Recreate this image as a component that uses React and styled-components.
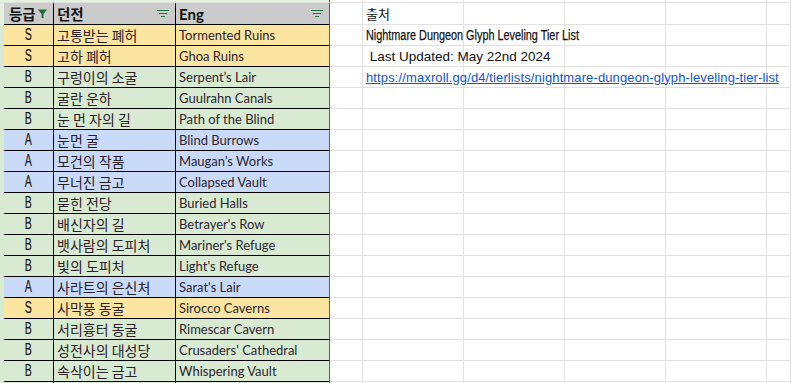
import React from "react";
import styled, { createGlobalStyle } from "styled-components";

const GlobalStyle = createGlobalStyle`
  html, body {
    margin: 0;
    padding: 0;
    background: #ffffff;
    overflow: hidden;
  }
  body {
    font-family: "Liberation Sans", Arial, sans-serif;
  }
`;

const tierColors = {
  S: "#fbe5a1",
  A: "#c9daf8",
  B: "#d9ead3",
};

const dungeons = [
  ["S", "고통받는 폐허", "Tormented Ruins"],
  ["S", "고하 폐허", "Ghoa Ruins"],
  ["B", "구렁이의 소굴", "Serpent’s Lair"],
  ["B", "굴란 운하", "Guulrahn Canals"],
  ["B", "눈 먼 자의 길", "Path of the Blind"],
  ["A", "눈먼 굴", "Blind Burrows"],
  ["A", "모건의 작품", "Maugan’s Works"],
  ["A", "무너진 금고", "Collapsed Vault"],
  ["B", "묻힌 전당", "Buried Halls"],
  ["B", "배신자의 길", "Betrayer's Row"],
  ["B", "뱃사람의 도피처", "Mariner's Refuge"],
  ["B", "빛의 도피처", "Light's Refuge"],
  ["A", "사라트의 은신처", "Sarat's Lair"],
  ["S", "사막풍 동굴", "Sirocco Caverns"],
  ["B", "서리흉터 동굴", "Rimescar Cavern"],
  ["B", "성전사의 대성당", "Crusaders' Cathedral"],
  ["B", "속삭이는 금고", "Whispering Vault"],
  ["B", "", ""],
];

const notes = [
  { kind: "plain", text: "출처" },
  { kind: "title", text: "Nightmare Dungeon Glyph Leveling Tier List" },
  { kind: "updated", text: " Last Updated: May 22nd 2024" },
  {
    kind: "link",
    text: "https://maxroll.gg/d4/tierlists/nightmare-dungeon-glyph-leveling-tier-list",
  },
];

const Sheet = styled.div`
  display: flex;
  flex-direction: column;
  width: 791px;
  height: 383px;
  overflow: hidden;
`;

const Row = styled.div`
  display: grid;
  grid-template-columns: 4px 50px 122px 154px 33px 101px 101px 101px 101px 1fr;
  height: ${(p) => p.$height}px;
  flex-shrink: 0;
`;

const Cell = styled.div`
  box-sizing: border-box;
  display: flex;
  align-items: center;
  justify-content: ${(p) => (p.$center ? "center" : "flex-start")};
  padding: 0 3px;
  background: ${(p) => p.$bg || "#ffffff"};
  border-right: 1px solid ${(p) => p.$right || "#e1e1e1"};
  border-bottom: 1px solid ${(p) => p.$bottom || "#e1e1e1"};
  white-space: nowrap;
  overflow: visible;
  position: relative;
  color: #1f1f1f;
  font-size: 13px;
`;

const HeadCell = styled(Cell)`
  background: #cbcbcb;
  font-weight: bold;
  font-size: 14px;
  color: #111;
  justify-content: space-between;
  padding: 0 6px 0 3px;
  border-bottom-color: #000;
`;

const Grade = styled.span`
  display: inline-block;
  font-family: "Liberation Sans", sans-serif;
  font-size: 16px;
  color: #1e1616;
  transform: scaleX(0.66);
  -webkit-text-stroke: 0.2px #1e1616;
`;

const Korean = styled.span`
  font-family: "Noto Sans CJK KR", sans-serif;
  font-size: 14px;
  color: #2a2028;
`;

const English = styled.span`
  font-family: Lato, "Open Sans", sans-serif;
  font-size: 13px;
  color: #2c2530;
`;

const HeadKorean = styled.span`
  font-family: "Noto Sans CJK KR", sans-serif;
  font-size: 14.5px;
  font-weight: bold;
  margin-left: ${(p) => p.$shift || 0}px;
`;

const HeadEnglish = styled.span`
  font-family: Lato, sans-serif;
  font-size: 15px;
  font-weight: bold;
`;

const Note = styled.span`
  display: inline-block;
  position: relative;
  z-index: 1;
  font-family: ${(p) =>
    p.$kind === "plain"
      ? `"Noto Sans CJK KR", sans-serif`
      : `"Liberation Sans", Arial, sans-serif`};
  font-size: ${(p) => (p.$kind === "updated" ? 13.5 : p.$kind === "title" ? 15.5 : 13)}px;
  color: ${(p) => (p.$kind === "link" ? "#1155cc" : "#111")};
  text-decoration: ${(p) => (p.$kind === "link" ? "underline" : "none")};
  letter-spacing: ${(p) => (p.$kind === "link" ? "0.12px" : "0")};
  white-space: pre;
  transform-origin: left center;
  transform: ${(p) => (p.$kind === "title" ? "scaleX(0.7)" : "none")};
  -webkit-text-stroke: ${(p) => (p.$kind === "title" ? "0.25px #111" : "0")};
`;

function FunnelIcon() {
  return (
    <svg width="9" height="10" viewBox="0 0 9 10">
      <path d="M0 0.5h9L5.5 5v4.5L3.5 8.5V5z" fill="#1e6b3a" />
    </svg>
  );
}

function FilterLines() {
  return (
    <svg width="12" height="8" viewBox="0 0 12 8">
      <rect x="0" y="0" width="12" height="1" fill="#1e7b45" />
      <rect x="2" y="3" width="8" height="1" fill="#1e7b45" />
      <rect x="4" y="6" width="4" height="1" fill="#1e7b45" />
    </svg>
  );
}

function EmptyCells({ from }) {
  const list = [];
  for (let i = from; i < 10; i++) {
    list.push(<Cell key={i} />);
  }
  return list;
}

export default function App() {
  return (
    <>
      <GlobalStyle />
      <Sheet>
        <Row $height={3}>
          <Cell $bg="#e5f1df" />
          <Cell $bg="#e5f1df" />
          <Cell $bg="#e5f1df" />
          <Cell $bg="#e5f1df" $right="#2e7d32" />
          <EmptyCells from={4} />
        </Row>
        <Row $height={22}>
          <Cell $bg="#e5f1df" />
          <HeadCell $right="#000">
            <HeadKorean $shift={2}>등급</HeadKorean>
            <FunnelIcon />
          </HeadCell>
          <HeadCell $right="#000">
            <HeadKorean>던전</HeadKorean>
            <FilterLines />
          </HeadCell>
          <HeadCell $right="#2e7d32">
            <HeadEnglish>Eng</HeadEnglish>
            <FilterLines />
          </HeadCell>
          <Cell />
          <Cell>
            <Note $kind={notes[0].kind}>{notes[0].text}</Note>
          </Cell>
          <EmptyCells from={6} />
        </Row>
        {dungeons.map(([tier, ko, en], i) => {
          const note = notes[i + 1];
          return (
            <Row key={i} $height={21}>
              <Cell $bg="#d9ead3" />
              <Cell $bg={tierColors[tier]} $center $right="#000" $bottom="#000">
                {ko && <Grade>{tier}</Grade>}
              </Cell>
              <Cell $bg={tierColors[tier]} $right="#000" $bottom="#000">
                <Korean>{ko}</Korean>
              </Cell>
              <Cell $bg={tierColors[tier]} $right="#2e7d32" $bottom="#000">
                <English>{en}</English>
              </Cell>
              <Cell />
              <Cell>
                {note && <Note $kind={note.kind}>{note.text}</Note>}
              </Cell>
              <EmptyCells from={6} />
            </Row>
          );
        })}
      </Sheet>
    </>
  );
}
